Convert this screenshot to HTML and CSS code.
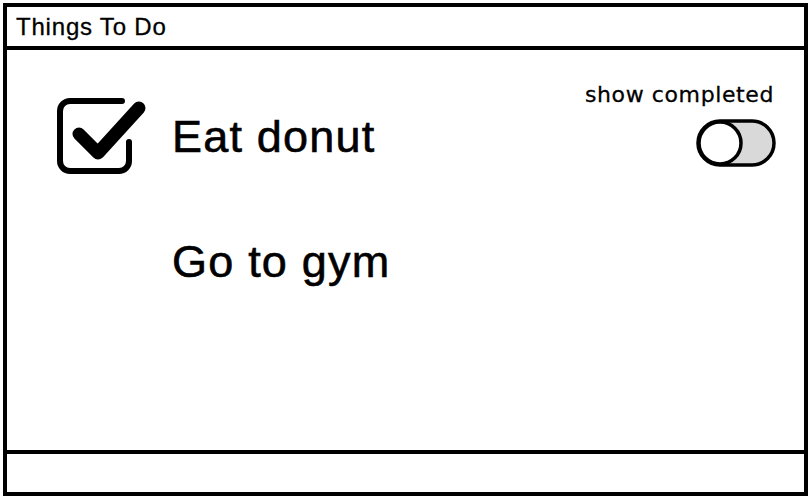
FILE: index.html
```html
<!DOCTYPE html>
<html lang="en">
<head>
  <meta charset="UTF-8" />
  <title>Things To Do</title>
  <link rel="stylesheet" href="styles.css">
</head>
<body>
  <div class="frame">
    <header class="title-bar">Things To Do</header>
    <main class="content">
      <ul class="todo-list">
        <li class="todo-item">
          <svg class="check" width="92" height="80" viewBox="0 0 92 80">
            <path d="M65 5 H13 A10 10 0 0 0 3 15 V65 A10 10 0 0 0 13 75 H62 A10 10 0 0 0 72 65 V46"
                  fill="none" stroke="#000" stroke-width="6" stroke-linecap="round" />
            <path d="M22 38 L41 57 L82 12" fill="none" stroke="#000" stroke-width="13"
                  stroke-linecap="round" stroke-linejoin="round" />
          </svg>
          <span class="todo-text">Eat donut</span>
        </li>
        <li class="todo-item">
          <span class="check-space"></span>
          <span class="todo-text">Go to gym</span>
        </li>
      </ul>
      <div class="filter">
        <span class="filter-label">show completed</span>
        <svg class="toggle" width="80" height="48" viewBox="0 0 80 48">
          <rect x="2" y="2" width="76" height="44" rx="22" fill="#d9d9d9" stroke="#000" stroke-width="3.5" />
          <circle cx="24" cy="24" r="21" fill="#fff" stroke="#000" stroke-width="3.5" />
        </svg>
      </div>
    </main>
    <footer class="status-bar"></footer>
  </div>
</body>
</html>
```
FILE: styles.css
```css
* {
  margin: 0;
  padding: 0;
  box-sizing: border-box;
}
html, body {
  width: 100%;
  height: 100%;
  overflow: hidden;
  background: #fff;
}
body {
  font-family: 'Liberation Sans', Arial, sans-serif;
  color: #000;
}
.frame {
  margin: 3px;
  height: 493px;
  border: 4px solid #000;
  display: flex;
  flex-direction: column;
}
.title-bar {
  height: 43px;
  border-bottom: 4px solid #000;
  padding-left: 9px;
  font-size: 24px;
  line-height: 39px;
  letter-spacing: 0.8px;
  -webkit-text-stroke: 0.3px #000;
}
.content {
  flex: 1;
  display: grid;
  grid-template-columns: 1fr auto;
}
.todo-list {
  list-style: none;
  padding: 46px 0 0 50px;
  display: flex;
  flex-direction: column;
  gap: 45px;
}
.todo-item {
  display: flex;
  align-items: center;
  height: 80px;
  gap: 23px;
}
.check, .check-space {
  display: block;
  width: 92px;
  height: 80px;
  flex-shrink: 0;
}
.todo-text {
  font-size: 45px;
  line-height: 52px;
  letter-spacing: 1.2px;
  padding-top: 2px;
  -webkit-text-stroke: 0.6px #000;
}
.filter {
  padding: 33px 30px 0 0;
  display: flex;
  flex-direction: column;
  align-items: flex-end;
  gap: 12px;
}
.filter-label {
  font-family: 'DejaVu Sans', sans-serif;
  font-size: 22px;
  line-height: 24px;
  letter-spacing: 0.6px;
  -webkit-text-stroke: 0.3px #000;
}
.toggle {
  display: block;
  margin-right: -2px;
}
.status-bar {
  height: 42px;
  border-top: 4px solid #000;
}
```
